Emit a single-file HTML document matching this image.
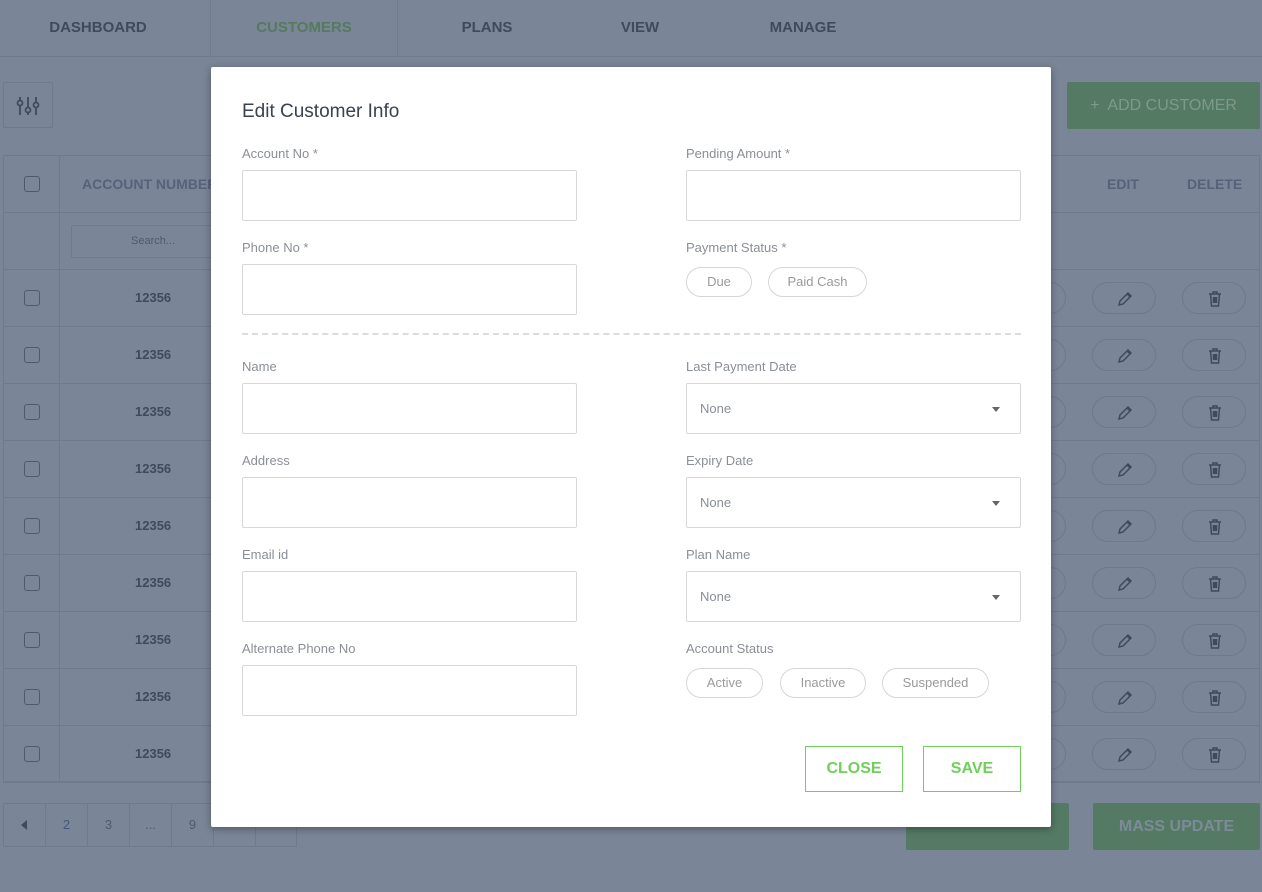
<!DOCTYPE html>
<html><head><style>
*{box-sizing:border-box;margin:0;padding:0}
body{width:1262px;height:892px;overflow:hidden;background:#7a8597;font-family:"Liberation Sans",sans-serif;position:relative}
.a{position:absolute}
.nav{left:0;top:0;width:1262px;height:57px;border-bottom:1px solid #6f7a8c}
.nav span{position:absolute;top:19px;font-weight:bold;font-size:15px;color:#3f4a5e;transform:translateX(-50%)}
.line{background:#6f7a8c}
.cb{width:16px;height:16px;border:1px solid #4f5a6e;border-radius:3px}
.pill{width:64px;height:32px;border:1px solid #6e798b;border-radius:16px}
.num{font-size:13px;font-weight:bold;color:#3f4a5e}
.modal{left:211px;top:67px;width:840px;height:760px;background:#fff;border-radius:2px;box-shadow:0 2px 8px rgba(0,0,0,.35)}
.lbl{font-size:13px;color:#8a8f96;margin-top:1px}
.inp{width:335px;height:51px;border:1px solid #d8d8d8;border-radius:2px}
.sel{font-size:13px;color:#8a8f96;padding:17px 0 0 13px}
.tri{right:20px;top:23px;border-left:4px solid transparent;border-right:4px solid transparent;border-top:5px solid #666}
.chip{height:30px;border:1px solid #d6d6d6;border-radius:15px;font-size:13px;color:#9a9a9a;text-align:center;line-height:28px}
.btn{width:98px;height:46px;border:1px solid #6fcf5a;color:#6fcf5a;font-weight:bold;font-size:16px;text-align:center;line-height:44px}
.th{font-size:14px;font-weight:bold;color:#56617a}
</style></head><body>
<div class="a nav">
<div class="a line" style="left:210px;top:0;width:1px;height:57px"></div>
<div class="a line" style="left:397px;top:0;width:1px;height:57px"></div>
<span style="left:98px">DASHBOARD</span>
<span style="left:304px;color:#557a5e">CUSTOMERS</span>
<span style="left:487px">PLANS</span>
<span style="left:640px">VIEW</span>
<span style="left:803px">MANAGE</span>
</div>
<div class="a" style="left:3px;top:82px;width:50px;height:46px;border:1px solid #6f7a8c;border-radius:2px">
<svg width="48" height="44"><g stroke="#3f4a5e" stroke-width="1.8" fill="none"><line x1="16" y1="14" x2="16" y2="32"/><line x1="24" y1="14" x2="24" y2="32"/><line x1="32" y1="14" x2="32" y2="32"/><circle cx="16" cy="20" r="2.5" fill="#7a8597"/><circle cx="24" cy="27" r="2.5" fill="#7a8597"/><circle cx="32" cy="22" r="2.5" fill="#7a8597"/></g></svg></div>
<div class="a" style="left:1067px;top:82px;width:193px;height:47px;background:#547a64;border-radius:2px;color:#7d9a89;font-size:16px;text-align:center;line-height:47px">+&nbsp; ADD CUSTOMER</div>
<div class="a" style="left:3px;top:155px;width:1257px;height:627px;border:1px solid #6f7a8c"></div>
<div class="a line" style="left:59px;top:155px;width:1px;height:627px"></div>
<div class="a line" style="left:3px;top:212px;width:1257px;height:1px"></div>
<div class="a line" style="left:3px;top:269px;width:1257px;height:1px"></div>
<div class="a th" style="left:82px;top:176px">ACCOUNT NUMBER</div>
<div class="a th" style="left:1107px;top:176px">EDIT</div>
<div class="a th" style="left:1187px;top:176px">DELETE</div>
<div class="a cb" style="left:24px;top:176px"></div>
<div class="a" style="left:71px;top:225px;width:160px;height:33px;border:1px solid #6f7a8c;border-radius:2px;font-size:11px;color:#4f5a6e;padding:9px 0 0 59px">Search...</div>
<div id="rows"></div>
<div class="a" style="left:3px;top:803px;width:294px;height:44px;border:1px solid #6f7a8c;display:flex">
<div style="width:42px;border-right:1px solid #6f7a8c;position:relative"><div class="a" style="left:17px;top:16px;border-top:5px solid transparent;border-bottom:5px solid transparent;border-right:6px solid #3f4a5e"></div></div>
<div style="width:42px;border-right:1px solid #6f7a8c;text-align:center;line-height:42px;font-size:13px;color:#3f5a7e">2</div>
<div style="width:42px;border-right:1px solid #6f7a8c;text-align:center;line-height:42px;font-size:13px;color:#4f5a6e">3</div>
<div style="width:42px;border-right:1px solid #6f7a8c;text-align:center;line-height:42px;font-size:13px;color:#4f5a6e">...</div>
<div style="width:42px;border-right:1px solid #6f7a8c;text-align:center;line-height:42px;font-size:13px;color:#4f5a6e">9</div>
<div style="width:42px;border-right:1px solid #6f7a8c"></div><div></div></div>
<div class="a" style="left:906px;top:803px;width:163px;height:47px;background:#547a64;border-radius:2px"></div>
<div class="a" style="left:1093px;top:803px;width:167px;height:47px;background:#547a64;border-radius:2px;color:#7d8a97;font-weight:bold;font-size:16px;text-align:center;line-height:47px">MASS UPDATE</div>

<div class="a modal">
<div class="a" style="left:31px;top:34px;font-size:19px;color:#3a4250">Edit Customer Info</div>
<div class="a lbl" style="left:31px;top:78px">Account No *</div>
<div class="a inp" style="left:31px;top:103px"></div>
<div class="a lbl" style="left:31px;top:172px">Phone No *</div>
<div class="a inp" style="left:31px;top:197px"></div>
<div class="a lbl" style="left:475px;top:78px">Pending Amount *</div>
<div class="a inp" style="left:475px;top:103px"></div>
<div class="a lbl" style="left:475px;top:172px">Payment Status *</div>
<div class="a chip" style="left:475px;top:200px;width:66px">Due</div>
<div class="a chip" style="left:557px;top:200px;width:99px">Paid Cash</div>
<div class="a" style="left:31px;top:266px;width:779px;border-top:2px dashed #dcdcdc"></div>
<div class="a lbl" style="left:31px;top:291px">Name</div>
<div class="a inp" style="left:31px;top:316px"></div>
<div class="a lbl" style="left:31px;top:385px">Address</div>
<div class="a inp" style="left:31px;top:410px"></div>
<div class="a lbl" style="left:31px;top:479px">Email id</div>
<div class="a inp" style="left:31px;top:504px"></div>
<div class="a lbl" style="left:31px;top:573px">Alternate Phone No</div>
<div class="a inp" style="left:31px;top:598px"></div>
<div class="a lbl" style="left:475px;top:291px">Last Payment Date</div>
<div class="a inp sel" style="left:475px;top:316px">None<div class="a tri"></div></div>
<div class="a lbl" style="left:475px;top:385px">Expiry Date</div>
<div class="a inp sel" style="left:475px;top:410px">None<div class="a tri"></div></div>
<div class="a lbl" style="left:475px;top:479px">Plan Name</div>
<div class="a inp sel" style="left:475px;top:504px">None<div class="a tri"></div></div>
<div class="a lbl" style="left:475px;top:573px">Account Status</div>
<div class="a chip" style="left:475px;top:601px;width:77px">Active</div>
<div class="a chip" style="left:569px;top:601px;width:86px">Inactive</div>
<div class="a chip" style="left:671px;top:601px;width:107px">Suspended</div>
<div class="a btn" style="left:594px;top:679px">CLOSE</div>
<div class="a btn" style="left:712px;top:679px">SAVE</div>
</div>
<script>
var h='';for(var i=0;i<9;i++){var y=270+i*57;
h+='<div class="a line" style="left:3px;top:'+(y+56)+'px;width:1257px;height:1px"></div>';
h+='<div class="a cb" style="left:24px;top:'+(y+20)+'px"></div>';
h+='<div class="a num" style="left:135px;top:'+(y+20)+'px">12356</div>';
h+='<div class="a pill" style="left:1002px;top:'+(y+12)+'px"></div>';
h+='<div class="a pill" style="left:1092px;top:'+(y+12)+'px"><svg class="a" style="left:23px;top:7px" width="18" height="18"><path d="M3 15 L4 11 L12 3 L15 6 L7 14 Z M11 4 L14 7" stroke="#3f4a5e" stroke-width="1.5" fill="none"/></svg></div>';
h+='<div class="a pill" style="left:1182px;top:'+(y+12)+'px"><svg class="a" style="left:23px;top:7px" width="18" height="18"><path d="M3 4H15M7 4V2H11V4M4.5 4L5.5 16H12.5L13.5 4M7.5 7V13M9 7V13M10.5 7V13" stroke="#3f4a5e" stroke-width="1.5" fill="none"/></svg></div>';}
document.getElementById('rows').innerHTML=h;
</script>
</body></html>
